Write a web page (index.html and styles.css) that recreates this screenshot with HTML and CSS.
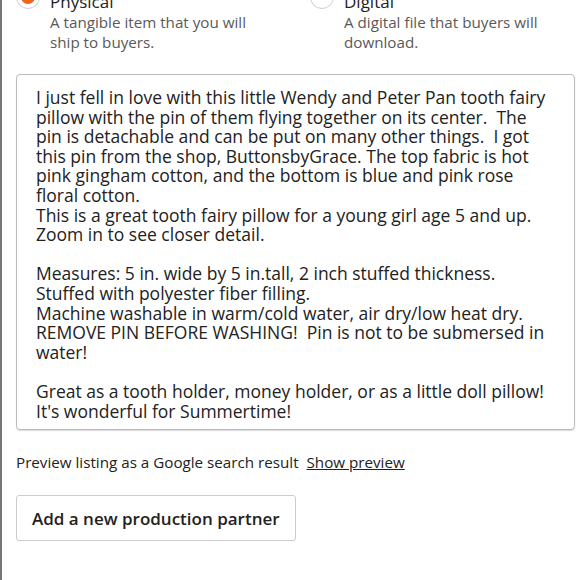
FILE: index.html
```html
<!DOCTYPE html>
<html>
<head>
<meta charset="utf-8">
<link rel="stylesheet" href="styles.css">
</head>
<body>
<div class="page">
  <div class="types">
    <div class="type">
      <span class="radio checked"></span>
      <div class="type-text">
        <div class="type-title">Physical</div>
        <div class="type-desc">A tangible item that you will<br>ship to buyers.</div>
      </div>
    </div>
    <div class="type">
      <span class="radio"></span>
      <div class="type-text">
        <div class="type-title">Digital</div>
        <div class="type-desc">A digital file that buyers will<br>download.</div>
      </div>
    </div>
  </div>
  <div class="desc-box"><div class="desc-text">I just fell in love with this little Wendy and Peter Pan tooth fairy
pillow with the pin of them flying together on its center.  The
pin is detachable and can be put on many other things.  I got
this pin from the shop, ButtonsbyGrace. The top fabric is hot
pink gingham cotton, and the bottom is blue and pink rose
floral cotton.
This is a great tooth fairy pillow for a young girl age 5 and up.
Zoom in to see closer detail.

Measures: 5 in. wide by 5 in.tall, 2 inch stuffed thickness.
Stuffed with polyester fiber filling.
Machine washable in warm/cold water, air dry/low heat dry.
REMOVE PIN BEFORE WASHING!  Pin is not to be submersed in
water!

Great as a tooth holder, money holder, or as a little doll pillow!
It's wonderful for Summertime!</div></div>
  <div class="preview">Preview listing as a Google search result <a class="preview-link">Show preview</a></div>
  <button class="partner-btn">Add a new production partner</button>
</div>
</body>
</html>
```
FILE: styles.css
```css
html, body {
  margin: 0;
  padding: 0;
  background: #fff;
}
body {
  width: 580px;
  height: 580px;
  overflow: hidden;
  font-family: "Open Sans", "Liberation Sans", Arial, sans-serif;
  color: #222;
  border-left: 2px solid #777;
  box-sizing: border-box;
}
.page {
  padding: 0 4px 0 14px;
  margin-top: -8px;
}
.types {
  display: flex;
}
.type {
  display: flex;
  gap: 10px;
}
.type:first-child {
  width: 294px;
}
.radio {
  flex: none;
  width: 24px;
  height: 24px;
  border: 1px solid #ccc;
  border-radius: 50%;
  box-sizing: border-box;
  margin-top: -7px;
  display: flex;
  align-items: center;
  justify-content: center;
}
.radio.checked::after {
  content: "";
  width: 14px;
  height: 14px;
  border-radius: 50%;
  background: #f1641e;
}
.type-title {
  font-size: 17px;
  line-height: 20px;
  color: #222;
}
.type-desc {
  font-size: 15.2px;
  line-height: 20px;
  color: #595959;
}
.desc-box {
  margin-top: 22px;
  width: 559px;
  height: 356px;
  box-sizing: border-box;
  border: 1px solid #bbb;
  border-radius: 4px;
  box-shadow: 0 1px 1px rgba(0,0,0,0.15);
  padding: 13px 6px 0 19px;
}
.desc-text {
  white-space: pre;
  font-size: 17.5px;
  line-height: 19.6px;
  color: #222;
}
.preview {
  margin-top: 22px;
  font-size: 15.2px;
  line-height: 20px;
  color: #222;
}
.preview-link {
  text-decoration: underline;
  margin-left: 4px;
}
.partner-btn {
  display: block;
  margin-top: 23px;
  width: 280px;
  height: 46px;
  background: #fff;
  border: 1px solid #ccc;
  border-radius: 3px;
  font-family: inherit;
  font-size: 17px;
  font-weight: 600;
  color: #222;
  text-align: left;
  padding: 0 15px;
}
```
